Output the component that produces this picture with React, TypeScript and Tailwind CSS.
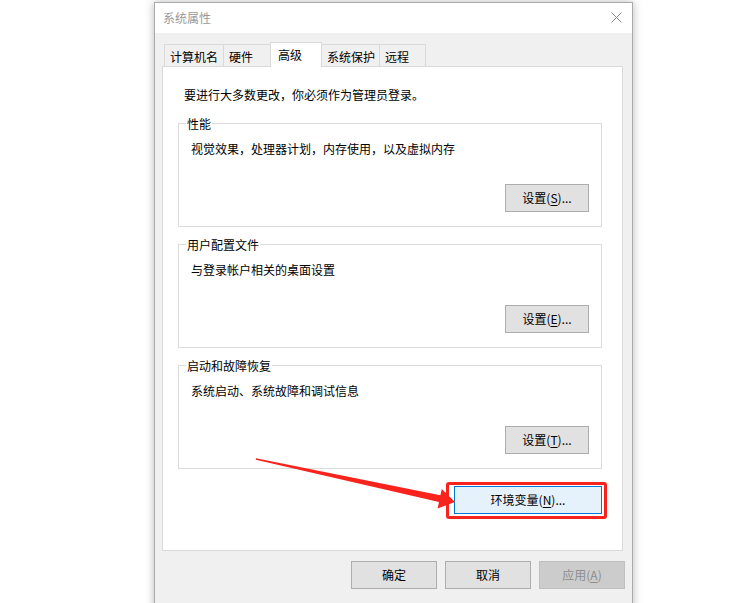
import type { ReactNode } from "react";

const font = "font-['Noto_Sans_CJK_SC','Microsoft_YaHei',sans-serif]";

type BtnProps = {
  children: ReactNode;
  width?: string;
  variant?: "normal" | "focus" | "disabled";
};

function Btn({ children, width = "w-[84px]", variant = "normal" }: BtnProps) {
  const look =
    variant === "focus"
      ? "border-[#0078d7] bg-[#e5f1fb] text-black"
      : variant === "disabled"
        ? "border-[#bfbfbf] bg-[#cccccc] text-[#8d8d8d]"
        : "border-[#adadad] bg-[#e1e1e1] text-black";

  return (
    <div
      className={`flex h-[28px] items-center justify-center border text-[12px] leading-[16px] ${width} ${look}`}
    >
      {children}
    </div>
  );
}

function Hotkey({ label, k }: { label: string; k: string }) {
  return (
    <span>
      {label}(<span className="underline underline-offset-2">{k}</span>)...
    </span>
  );
}

type GroupProps = {
  title: string;
  desc: string;
  hotkey: string;
};

function Group({ title, desc, hotkey }: GroupProps) {
  return (
    <div className="relative mt-[17px] h-[104px] w-[424px] border border-[#dcdcdc] px-[12px] pt-[17px]">
      <span className="absolute -top-[8px] left-[7px] bg-white px-[1px] leading-[16px]">{title}</span>
      <div className="leading-[16px]">{desc}</div>
      <div className="mt-[27px] flex justify-end">
        <Btn>
          <Hotkey label="设置" k={hotkey} />
        </Btn>
      </div>
    </div>
  );
}

const tabs = [
  { name: "计算机名", w: "w-[60px]" },
  { name: "硬件", w: "w-[48px]" },
  { name: "高级", w: "w-[52px]", active: true },
  { name: "系统保护", w: "w-[59px]" },
  { name: "远程", w: "w-[47px]" },
];

export default function App() {
  return (
    <div className={`relative h-[603px] w-[730px] overflow-hidden bg-white text-[12px] text-black ${font}`}>
      <div className="ml-[154px] mt-[2px] h-[640px] w-[479px] border border-[#aaaaaa] bg-[#f0f0f0] shadow-[0_0_9px_rgba(0,0,0,0.28)]">
        {/* title bar */}
        <div className="flex h-[30px] items-center justify-between bg-white pl-[8px] pr-[10px]">
          <span className="leading-[16px] text-[#999999]">系统属性</span>
          <svg width="11" height="11" viewBox="0 0 11 11" className="mt-[-1px]">
            <path d="M0.5 0.5 L10.5 10.5 M10.5 0.5 L0.5 10.5" stroke="#8a8a8a" strokeWidth="1" fill="none" />
          </svg>
        </div>

        {/* body */}
        <div className="pl-[7px] pt-[9px]">
          <div className="flex h-[24px] items-end pl-[2px]">
            {tabs.map((t, i) =>
              t.active ? (
                <div
                  key={t.name}
                  className={`relative z-10 -mb-px flex h-[25px] items-center border border-b-0 border-[#d9d9d9] bg-white pl-[7px] leading-[16px] ${t.w} ${i > 0 ? "-ml-px" : ""}`}
                >
                  {t.name}
                </div>
              ) : (
                <div
                  key={t.name}
                  className={`flex h-[22px] items-center border border-b-0 border-[#d9d9d9] bg-[#f0f0f0] pl-[5px] pt-[2px] leading-[16px] ${t.w} ${i > 0 ? "-ml-px" : ""}`}
                >
                  {t.name}
                </div>
              ),
            )}
          </div>

          <div className="h-[485px] w-[461px] border border-[#d9d9d9] bg-white pt-[20px]">
            <div className="pl-[21px] leading-[16px]">要进行大多数更改，你必须作为管理员登录。</div>
            <div className="ml-[15px] mt-[3px] flex flex-col">
              <Group title="性能" desc="视觉效果，处理器计划，内存使用，以及虚拟内存" hotkey="S" />
              <Group title="用户配置文件" desc="与登录帐户相关的桌面设置" hotkey="E" />
              <Group title="启动和故障恢复" desc="系统启动、系统故障和调试信息" hotkey="T" />
              <div className="mt-[17px] flex w-[424px] justify-end">
                <div className="relative">
                  <Btn width="w-[148px]" variant="focus">
                    <Hotkey label="环境变量" k="N" />
                  </Btn>
                  <div className="absolute -bottom-[5px] -left-[8px] -right-[5px] -top-[4px] rounded-[3px] border-[3px] border-[#f8231c]" />
                </div>
              </div>
            </div>
          </div>
        </div>

        {/* footer buttons */}
        <div className="mt-[10px] flex justify-end gap-[8px] pr-[7px]">
          <Btn width="w-[86px]">确定</Btn>
          <Btn width="w-[86px]">取消</Btn>
          <Btn width="w-[86px]" variant="disabled">
            <span>
              应用(<span className="underline underline-offset-2">A</span>)
            </span>
          </Btn>
        </div>
      </div>

      {/* annotation arrow */}
      <svg className="pointer-events-none absolute left-0 top-0" width="730" height="603" viewBox="0 0 730 603">
        <polygon
          points="256,458.3 440.4,495.3 441.8,488.9 455,502 437.6,508.5 439,502.1 255.8,459.7"
          fill="#f8231c"
        />
      </svg>
    </div>
  );
}
